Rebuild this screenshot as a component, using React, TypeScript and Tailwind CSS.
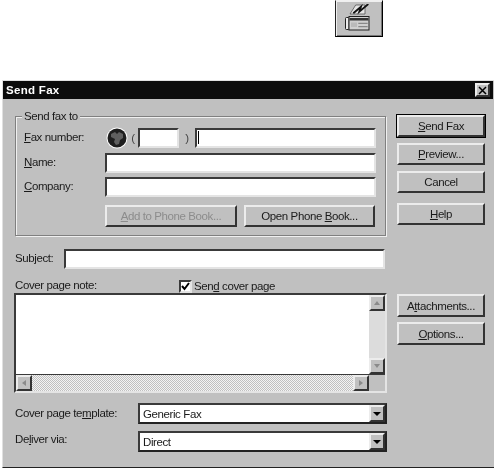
import React from "react";

const raised =
  "border-2 border-t-[#ececec] border-l-[#ececec] border-b-[#333333] border-r-[#333333] bg-[#c0c0c0]";
const sunken =
  "border-2 border-t-[#3a3a3a] border-l-[#3a3a3a] border-b-[#e4e4e4] border-r-[#e4e4e4] bg-white";

const Btn = ({
  children,
  className = "",
  disabled,
  isDefault,
}: {
  children: React.ReactNode;
  className?: string;
  disabled?: boolean;
  isDefault?: boolean;
}) => (
  <div
    className={`${raised} flex items-center justify-center h-[22px] ${
      isDefault ? "outline outline-1 outline-black" : ""
    } ${disabled ? "text-[#8c8c8c]" : "text-[#1a1a1a]"} ${className}`}
  >
    <span>{children}</span>
  </div>
);

const Field = ({ className = "", children }: { className?: string; children?: React.ReactNode }) => (
  <div className={`${sunken} h-[20px] ${className}`}>{children}</div>
);

const ArrowBtn = ({ dir }: { dir: "up" | "down" | "left" | "right" }) => {
  const pts = {
    up: "2,7 5,3 8,7",
    down: "2,3 5,7 8,3",
    left: "7,2 3,5 7,8",
    right: "3,2 7,5 3,8",
  }[dir];
  return (
    <div className={`${raised} w-[16px] h-[16px] flex items-center justify-center`}>
      <svg width="10" height="10" viewBox="0 0 10 10">
        <polygon points={pts} fill="#8a8a8a" />
      </svg>
    </div>
  );
};

const Combo = ({ value }: { value: string }) => (
  <div className="flex-1 h-[21px] flex items-center border-2 border-t-[#3a3a3a] border-l-[#3a3a3a] border-b-[#222222] border-r-[#222222] bg-white">
    <span className="flex-1 pl-[3px] text-[#1a1a1a]">{value}</span>
    <div className={`${raised} w-[16px] h-[17px] flex items-center justify-center`}>
      <svg width="10" height="8" viewBox="0 0 10 8">
        <polygon points="1,2 9,2 5,6" fill="#000" />
      </svg>
    </div>
  </div>
);

const FaxIcon = () => (
  <svg width="28" height="30" viewBox="0 0 28 30">
    <polygon points="5,10 10.7,1 20,1 20,10" fill="#e4e4e4" stroke="#444" strokeWidth="0.7" />
    <path d="M8.3,9.3 L16,2.7 L14.3,7.7 L23.3,0" fill="none" stroke="#111" strokeWidth="1.8" />
    <rect x="0.5" y="13.5" width="3.5" height="12" rx="1" fill="#ececec" stroke="#222" strokeWidth="1" />
    <rect x="4" y="12.5" width="20" height="13.5" fill="#d0d0d0" stroke="#222" strokeWidth="1" />
    <rect x="4.5" y="14" width="19" height="2.5" fill="#333" />
    <path d="M7,18.5 v4.5 M9,18.5 v4.5 M11,18.5 v4.5" stroke="#9a9a9a" strokeWidth="0.8" />
    <path d="M13.3,19.3 h9.4 M13.3,22.7 h9.4" stroke="#777" strokeWidth="1" />
  </svg>
);

const Globe = () => (
  <svg width="22" height="22" viewBox="0 0 22 22">
    <circle cx="11" cy="11" r="10.5" fill="#ffffff" />
    <circle cx="11" cy="11" r="9.5" fill="#1f1f1f" />
    <path d="M5,7 L9,5 L11,7 L13,5 L17,7 L17,11 L14,13 L13,17 L10,18 L8,15 L9,12 L5,10 Z" fill="#606060" />
  </svg>
);

export default function App() {
  return (
    <div
      className="w-[494px] h-[471px] bg-white overflow-hidden text-[11.5px] tracking-[-0.4px] leading-[14px] text-[#1a1a1a] blur-[0.4px]"
      style={{ fontFamily: '"Liberation Sans", Arial, sans-serif' }}
    >
      {/* toolbar button */}
      <div className="h-[80px] pl-[335px]">
        <div className="w-[48px] h-[37px] flex items-center justify-center border border-t-[#f0f0f0] border-l-[#222222] border-r-black border-b-black bg-[#c0c0c0] shadow-[inset_1px_1px_0_#efefef,inset_-1px_-1px_0_#777777]">
          <FaxIcon />
        </div>
      </div>

      {/* dialog */}
      <div className="ml-[2px] w-[492px] h-[388px] bg-[#c0c0c0] border-l border-t border-l-[#e0e0e0] border-t-[#e0e0e0] border-b border-b-[#222222] flex flex-col">
        <div className="mr-px h-[18px] bg-[#0c0c0c] flex items-center justify-between pl-[3px] pr-[3px]">
          <span className="font-bold text-white tracking-[0.3px]">Send Fax</span>
          <div className={`${raised} w-[15px] h-[14px] flex items-center justify-center`}>
            <svg width="9" height="9" viewBox="0 0 9 9">
              <path d="M1,1 L8,8 M8,1 L1,8" stroke="#000" strokeWidth="1.5" />
            </svg>
          </div>
        </div>

        <div className="flex flex-1 pl-[11px] gap-[9px]">
          {/* left column */}
          <div className="w-[373px] pt-[11px] flex flex-col">
            <fieldset className="h-[126px] ml-[1px] w-[371px] border border-[#808080] rounded-none shadow-[inset_1px_1px_0_#f0f0f0,1px_1px_0_#f0f0f0]">
              <legend className="ml-[6px] px-[2px] bg-[#c0c0c0] leading-[13px]">Send fax to</legend>
              <div className="pt-[4px] flex flex-col gap-[4px] pl-[8px] pr-[9px]">
                <div className="flex items-center">
                  <span className="w-[81px] pb-[2px]"><u>F</u>ax number:</span>
                  <div className="ml-[1px] flex"><Globe /></div>
                  <span className="w-[10px] text-center text-[#444444]">(</span>
                  <Field className="w-[41px]" />
                  <span className="w-[16px] text-center text-[#444444]">)</span>
                  <Field className="flex-1">
                    <div className="ml-[1px] mt-[1px] w-px h-[13px] bg-black" />
                  </Field>
                </div>
                <div className="flex items-center">
                  <span className="w-[81px] pb-[3px]"><u>N</u>ame:</span>
                  <Field className="flex-1" />
                </div>
                <div className="flex items-center">
                  <span className="w-[81px] pb-[2px]"><u>C</u>ompany:</span>
                  <Field className="flex-1" />
                </div>
                <div className="flex pl-[81px] gap-[7px] mt-[4px]">
                  <Btn disabled className="w-[132px]"><u>A</u>dd to Phone Book...</Btn>
                  <Btn className="w-[131px]">Open Phone <u>B</u>ook...</Btn>
                </div>
              </div>
            </fieldset>

            <div className="flex items-center mt-[13px] h-[20px] mr-[2px]">
              <span className="w-[50px] pl-[1px] pb-[2px]">Subject:</span>
              <Field className="flex-1" />
            </div>

            <div className="flex items-end h-[24px] pl-[1px]">
              <span className="w-[164px] pb-[1px]">Cover page note:</span>
              <div className="flex items-center gap-[2px]">
                <div className={`${sunken} w-[13px] h-[13px] flex items-center justify-center`}>
                  <svg width="9" height="9" viewBox="0 0 9 9">
                    <path d="M1,4 L3.5,7 L8,1" fill="none" stroke="#000" strokeWidth="2" />
                  </svg>
                </div>
                <span>Sen<u>d</u> cover page</span>
              </div>
            </div>

            {/* note box */}
            <div className="h-[100px] border-2 border-t-[#3a3a3a] border-l-[#3a3a3a] border-b-[#e4e4e4] border-r-[#e4e4e4] flex flex-col">
              <div className="flex-1 flex">
                <div className="flex-1 bg-white" />
                <div className="w-[16px] flex flex-col justify-between bg-[#dcdcdc]">
                  <ArrowBtn dir="up" />
                  <ArrowBtn dir="down" />
                </div>
              </div>
              <div className="h-[17px] flex border-t border-[#3a3a3a]">
                <ArrowBtn dir="left" />
                <div className="flex-1 bg-[repeating-conic-gradient(#c0c0c0_0_25%,#f4f4f4_0_50%)] bg-[length:2px_2px]" />
                <ArrowBtn dir="right" />
                <div className="w-[16px] bg-[#c0c0c0]" />
              </div>
            </div>

            <div className="flex items-center mt-[10px]">
              <span className="w-[124px] pl-[1px] pb-[1px]">Cover page te<u>m</u>plate:</span>
              <Combo value="Generic Fax" />
            </div>
            <div className="flex items-center mt-[7px]">
              <span className="w-[124px] pl-[1px] pb-[5px]">De<u>l</u>iver via:</span>
              <Combo value="Direct" />
            </div>
          </div>

          {/* right column */}
          <div className="w-[88px] ml-[1px] pt-[16px] flex flex-col">
            <Btn isDefault><u>S</u>end Fax</Btn>
            <Btn className="mt-[6px]"><u>P</u>review...</Btn>
            <Btn className="mt-[6px]">Cancel</Btn>
            <Btn className="mt-[10px]"><u>H</u>elp</Btn>
            <Btn className="mt-[69px] h-[23px]">A<u>t</u>tachments...</Btn>
            <Btn className="mt-[5px] h-[23px]"><u>O</u>ptions...</Btn>
          </div>
        </div>
      </div>
    </div>
  );
}
